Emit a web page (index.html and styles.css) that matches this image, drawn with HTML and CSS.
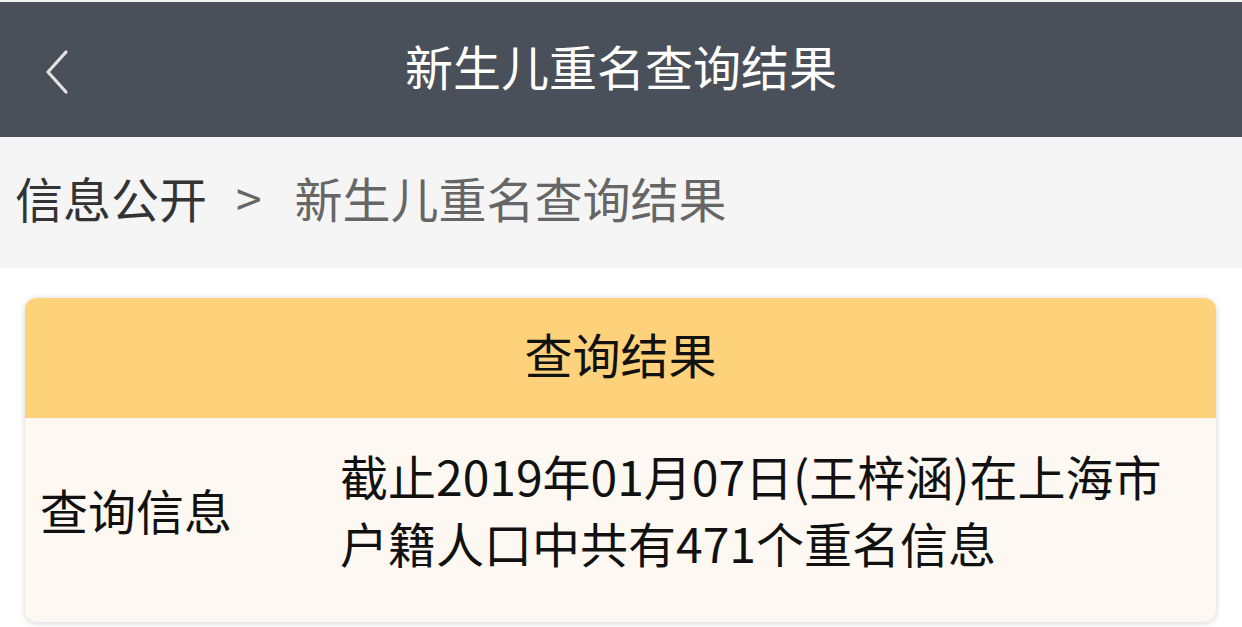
FILE: index.html
```html
<!DOCTYPE html>
<html lang="zh-CN">
<head>
<meta charset="utf-8">
<title>新生儿重名查询结果</title>
<link rel="stylesheet" href="styles.css">
</head>
<body>
<header class="topbar">
  <span class="back">
    <svg width="30" height="50" viewBox="0 0 30 50"><path d="M21 4 L3 24 L21 44" fill="none" stroke="#e2e2e2" stroke-width="3.2" stroke-linecap="round" stroke-linejoin="round"/></svg>
  </span>
  <h1 class="title">新生儿重名查询结果</h1>
</header>
<nav class="crumbs">
  <span class="crumb-root">信息公开</span>
  <span class="crumb-sep">&gt;</span>
  <span class="crumb-cur">新生儿重名查询结果</span>
</nav>
<main class="content">
  <section class="card">
    <div class="card-head">查询结果</div>
    <div class="card-body">
      <div class="label">查询信息</div>
      <div class="value">截止2019年01月07日(王梓涵)在上海市户籍人口中共有471个重名信息</div>
    </div>
  </section>
</main>
</body>
</html>
```
FILE: styles.css
```css
* { box-sizing: border-box; }
html, body { margin: 0; padding: 0; }
body {
  font-family: "Noto Sans CJK SC", "Noto Sans", sans-serif;
  background: #ffffff;
  border-top: 2px solid #f2f2f2;
  width: 1242px;
  height: 627px;
  overflow: hidden;
}
.topbar {
  height: 135px;
  background: #4a5059;
  display: flex;
  align-items: center;
  justify-content: center;
  padding-bottom: 10px;
  position: relative;
}
.back {
  position: absolute;
  left: 45px;
  top: 46px;
  display: block;
  width: 30px;
  height: 50px;
}
.back svg { display: block; }
.title {
  margin: 0;
  font-size: 48px;
  font-weight: 400;
  color: #ffffff;
  line-height: 1;
}
.crumbs {
  height: 131px;
  background: #f5f5f5;
  display: flex;
  align-items: center;
  padding-left: 15px;
  padding-bottom: 12px;
  font-size: 48px;
  line-height: 1;
}
.crumb-root { color: #333333; }
.crumb-sep { color: #666666; font-size: 46px; margin: 0 33px 0 29px; }
.crumb-cur { color: #666666; }
.content {
  padding: 30px 26px 0 25px;
}
.card {
  border-radius: 12px;
  overflow: hidden;
  box-shadow: 0 1px 6px rgba(0,0,0,0.18);
  background: #fdf9f2;
}
.card-head {
  height: 120px;
  background: #fdd27b;
  display: flex;
  align-items: center;
  justify-content: center;
  padding-bottom: 10px;
  font-size: 48px;
  color: #111111;
  line-height: 1;
}
.card-body {
  display: flex;
  align-items: center;
  height: 204px;
  padding: 0 20px 22px 15px;
  color: #111111;
  font-size: 48px;
}
.label {
  width: 300px;
  flex: none;
  line-height: 1;
}
.value {
  flex: 1;
  line-height: 67px;
}
```
